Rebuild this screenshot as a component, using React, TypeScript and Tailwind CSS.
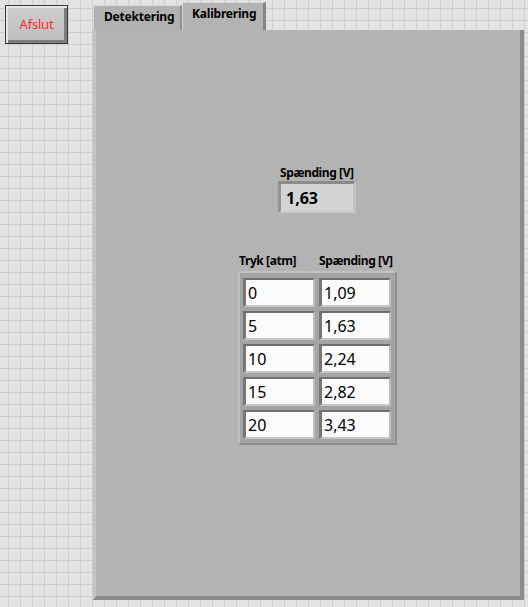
import React from "react";

const rows: [string, string][] = [
  ["0", "1,09"],
  ["5", "1,63"],
  ["10", "2,24"],
  ["15", "2,82"],
  ["20", "3,43"],
];

const Cell = ({ value }: { value: string }) => (
  <div className="w-[72px] h-[29px] bg-[#fbfbfb] border-t-[2px] border-l-[3px] border-b-[2px] border-r-[2px] border-t-[#6f6f6f] border-l-[#777] border-b-[#c6c6c6] border-r-[#bcbcbc] pl-[2px] flex items-center text-[16px] leading-none text-black">
    {value}
  </div>
);

export default function App() {
  return (
    <div className="w-[528px] h-[607px] overflow-hidden flex items-start bg-[#e3e3e3] bg-[linear-gradient(to_right,#cdcdcd_1px,transparent_1px),linear-gradient(to_bottom,#cdcdcd_1px,transparent_1px)] bg-[size:12px_12px] bg-[position:8px_8px] font-['Noto_Sans',sans-serif]">
      {/* stop button */}
      <button className="ml-[5px] mt-[5px] w-[63px] h-[39px] border border-[#3a3a3a] bg-[linear-gradient(to_bottom,#cfcfcf,#bdbdbd)] shadow-[inset_2px_2px_0_#e6e6e6,inset_-3px_-3px_0_#7d7d7d] text-[#ff2b2b] text-[13px] tracking-[-0.2px] flex items-center justify-center">
        Afslut
      </button>

      {/* tab control */}
      <div className="ml-[25px] w-[431px] flex flex-col">
        <div className="h-[30px] flex items-end">
          <div className="w-[89px] h-[25px] bg-[#b1b1b1] border-t border-l border-[#d9d9d9] border-r-2 border-r-[#8f8f8f] pl-[10px] pt-[2px] text-[12px] font-bold tracking-[-0.2px] text-black leading-[18px]">
            Detektering
          </div>
          <div className="w-[84px] h-[28px] bg-[#b3b3b3] border-t border-l border-[#d9d9d9] border-r-[3px] border-r-[#858585] pl-[9px] pt-[2px] text-[12px] font-bold tracking-[-0.2px] text-black leading-[18px]">
            Kalibrering
          </div>
        </div>

        <div className="h-[570px] bg-[#b3b3b3] border-l-[3px] border-l-[#c4c4c4] border-r-[4px] border-r-[#8c8c8c] border-b-[4px] border-b-[#8a8a8a] flex flex-col">
          {/* numeric indicator */}
          <div className="ml-[182px] mt-[135px] flex flex-col">
            <span className="pl-[2px] text-[12px] font-bold tracking-[-0.4px] leading-[16px] text-black">
              Spænding [V]
            </span>
            <div className="w-[78px] h-[32px] bg-[#d3d3d3] border-t-[3px] border-l-[3px] border-b-[2px] border-r-[3px] border-t-[#8b8b8b] border-l-[#949494] border-b-[#c9c9c9] border-r-[#c3c3c3] pl-[5px] flex items-center text-[16px] font-bold text-black leading-none">
              1,63
            </div>
          </div>

          {/* array of clusters */}
          <div className="ml-[142px] mt-[40px] flex flex-col">
            <div className="flex text-[12px] font-bold tracking-[-0.4px] leading-[16px] text-black">
              <span className="w-[81px] pl-[1px]">Tryk [atm]</span>
              <span>Spænding [V]</span>
            </div>
            <div className="mt-[2px] w-[159px] bg-[#a4a4a4] border-2 border-t-[#c2c2c2] border-l-[#bdbdbd] border-b-[#8d8d8d] border-r-[#8f8f8f] pl-[3px] pt-[5px] pb-[4px] grid grid-cols-[72px_72px] gap-x-[4px] gap-y-[4px]">
              {rows.map(([p, v]) => (
                <React.Fragment key={p}>
                  <Cell value={p} />
                  <Cell value={v} />
                </React.Fragment>
              ))}
            </div>
          </div>
        </div>
      </div>
    </div>
  );
}
